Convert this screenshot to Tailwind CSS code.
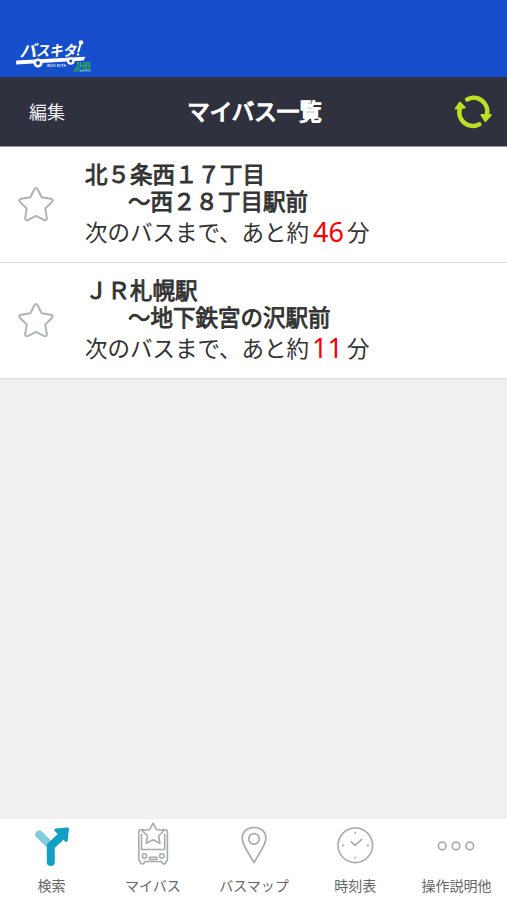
<!DOCTYPE html>
<html lang="ja">
<head>
    <meta charset="UTF-8">
    <meta name="viewport" content="width=device-width, initial-scale=1.0">
    <title>マイバス一覧</title>
    <script src="https://cdn.jsdelivr.net/npm/@tailwindcss/browser@4"></script>
</head>
<body class="flex h-screen flex-col overflow-hidden bg-[#f0f0f0] font-['Noto_Sans_CJK_JP',sans-serif] text-[#333333]">

    <!-- ロゴ -->
    <div class="h-[77px] shrink-0 bg-[#154dcb] pt-[34px] pl-3">
        <svg class="h-[42px] w-[88px]" viewBox="12 34 88 42" role="img" aria-label="バスキタ!">
            <g fill="#fff" font-weight="700">
                <text transform="translate(19.5 56.6) skewX(-12)" font-size="17" textLength="17" lengthAdjust="spacingAndGlyphs">バ</text>
                <text transform="translate(36 56.4) skewX(-12)" font-size="15" textLength="40" lengthAdjust="spacingAndGlyphs">スキタ</text>
            </g>
            <path d="M80.2 45l-1.8 6.5" stroke="#fff" stroke-width="2" stroke-linecap="round" />
            <circle cx="81" cy="42.5" r="2.3" fill="#fff" />
            <circle cx="78" cy="54.5" r="1.2" fill="#fff" />
            <path d="M16.3 60.4L85.5 56.8L83.5 60.6L16 64.4Z" fill="#fff" />
            <circle cx="38" cy="63" r="3.3" fill="#154dcb" stroke="#fff" stroke-width="2.6" />
            <circle cx="70.8" cy="61" r="2.7" fill="#154dcb" stroke="#fff" stroke-width="2.2" />
            <text x="47" y="67" font-size="4" font-weight="700" fill="#d5e0fa" textLength="19">BUS KITA</text>
            <text x="74.5" y="70.3" font-size="10" font-weight="900" font-style="italic" font-family="Liberation Sans" fill="#31b14a" textLength="16" lengthAdjust="spacingAndGlyphs">JHB</text>
            <path d="M73 71h10" stroke="#31b14a" stroke-width="1" />
            <path d="M80 70.8h11" stroke="#b9cdf5" stroke-width="0.8" />
        </svg>
    </div>

    <!-- タイトルバー -->
    <header class="grid h-[70px] shrink-0 grid-cols-[1fr_auto_1fr] items-center border-b border-[#99989c] bg-[#30313e] pr-[15px] pb-[2px] pl-[29px] text-white">
        <button class="justify-self-start text-[18px] leading-none text-[#f0f0f4]">編集</button>
        <h1 class="-ml-3 text-[22.5px] leading-none [-webkit-text-stroke:1.3px]">マイバス一覧</h1>
        <button class="justify-self-end pt-[2px]" aria-label="更新">
            <svg class="h-9 w-[38px]" viewBox="454 94 38 36" fill="none" stroke="#bfdf24" stroke-width="4.6" stroke-linecap="round">
                <path d="M467.2 99.4A13.6 13.6 0 0 1 486.8 115" />
                <path d="M479.3 124.3A13.6 13.6 0 0 1 460 108" />
                <path d="M481.5 115h9.2l-5.4 6z" fill="#bfdf24" stroke-width="2" stroke-linejoin="round" />
                <path d="M455.8 108.6l4.2-6 4.8 5z" fill="#bfdf24" stroke-width="2" stroke-linejoin="round" />
            </svg>
        </button>
    </header>

    <!-- マイバス -->
    <ul class="shrink-0 text-[22.5px] leading-[27px]">
        <li class="flex h-[116px] border-b border-[#dcdcdc] bg-white">
            <div class="w-[85px] shrink-0 pt-[39px] pl-[17px]">
                <svg class="size-[38px]" viewBox="0 0 38 38" fill="none" stroke="#adb4b6" stroke-width="2" stroke-linejoin="round">
                    <path d="M17.3 3.5Q19 .5 20.7 3.5L24.6 11.3L33.8 12.8Q37 13.5 34.8 16L28.2 22.6L29.8 31.6Q30 35.3 26.8 33.8L19 29.8L11.2 33.8Q8 35.3 8.2 31.6L9.8 22.6L3.2 16Q1 13.5 4.2 12.8L13.4 11.3Z" />
                </svg>
            </div>
            <div class="pt-[13px] whitespace-nowrap">
                <p class="[-webkit-text-stroke:0.9px]">北５条西１７丁目</p>
                <p class="pl-[43px] [-webkit-text-stroke:0.9px]">～西２８丁目駅前</p>
                <p class="mt-1 flex">次のバスまで、あと約<span class="w-[38px] pl-1 font-['Noto_Sans'] text-[27px] text-[#ff0000]">46</span>分</p>
            </div>
        </li>
        <li class="flex h-[116px] border-b border-[#dcdcdc] bg-white">
            <div class="w-[85px] shrink-0 pt-[39px] pl-[17px]">
                <svg class="size-[38px]" viewBox="0 0 38 38" fill="none" stroke="#adb4b6" stroke-width="2" stroke-linejoin="round">
                    <path d="M17.3 3.5Q19 .5 20.7 3.5L24.6 11.3L33.8 12.8Q37 13.5 34.8 16L28.2 22.6L29.8 31.6Q30 35.3 26.8 33.8L19 29.8L11.2 33.8Q8 35.3 8.2 31.6L9.8 22.6L3.2 16Q1 13.5 4.2 12.8L13.4 11.3Z" />
                </svg>
            </div>
            <div class="pt-[13px] whitespace-nowrap">
                <p class="[-webkit-text-stroke:0.9px]">ＪＲ札幌駅</p>
                <p class="pl-[43px] [-webkit-text-stroke:0.9px]">～地下鉄宮の沢駅前</p>
                <p class="mt-1 flex">次のバスまで、あと約<span class="w-[38px] pl-[3px] font-['Noto_Sans'] text-[27px] text-[#ff0000]">11</span>分</p>
            </div>
        </li>
    </ul>

    <!-- タブバー -->
    <nav class="mt-auto grid h-[81px] shrink-0 grid-cols-5 bg-white pl-px text-[14px] leading-5 whitespace-nowrap text-[#666666]">
        <a class="flex flex-col items-center pt-[3px]">
            <svg class="h-12 w-10" viewBox="32 822 40 48" fill="none" stroke-width="8" stroke-linecap="round">
                <path d="M39.3 834.5l8 8" stroke="#83cbe0" />
                <path d="M50.8 862V846L60 837.5" stroke="#12a0c5" stroke-linejoin="round" />
                <path d="M55.8 830L67.4 829L66.2 840.5Z" fill="#12a0c5" stroke="#12a0c5" stroke-width="3" stroke-linejoin="round" />
            </svg>
            <span class="mt-[5px]">検索</span>
        </a>
        <a class="flex flex-col items-center pt-[3px]">
            <svg class="h-12 w-10" viewBox="133 822 40 48" fill="none" stroke="#a5acae" stroke-width="1.6" stroke-linejoin="round">
                <path d="M144.3 829.8H141Q138.8 829.8 138.8 832V859.8Q138.8 861.2 140.3 861.2V862.2Q140.5 864 142.3 864Q144.2 864 144.5 861.5H161.7Q162 864 163.9 864Q165.8 864 166 862.2V861.2Q167.4 861.2 167.4 859.8V832Q167.4 829.8 165.2 829.8H162" />
                <path d="M142.5 834.5H141.5V849.5H164.7V834.5H163.7" />
                <path d="M153.1 823.2L156.4 829.5L164.2 830.5L158.6 836L159.9 843.4L153.1 839.8L146.3 843.4L147.6 836L142 830.5L149.8 829.5Z" fill="#fff" />
                <circle cx="144.5" cy="856" r="2.2" />
                <circle cx="161.8" cy="856" r="2.2" />
                <path d="M149.5 859.5V857.3H156.7V859.5Z" />
            </svg>
            <span class="mt-[5px]">マイバス</span>
        </a>
        <a class="flex flex-col items-center pt-[3px]">
            <svg class="h-12 w-10" viewBox="234 822 40 48" fill="none" stroke="#a5acae" stroke-width="1.7" stroke-linejoin="round">
                <path d="M254 862.5C250.5 856 242.2 845 242.2 838.5C242.2 831.5 247 827.5 254 827.5S265.9 831.5 265.9 838.5C265.9 845 257.5 856 254 862.5Z" />
                <circle cx="254" cy="838.9" r="5.3" />
            </svg>
            <span class="mt-[5px]">バスマップ</span>
        </a>
        <a class="flex flex-col items-center pt-[3px]">
            <svg class="h-12 w-10" viewBox="335 822 40 48" fill="none" stroke="#a5acae" stroke-width="1.6" stroke-linecap="round">
                <circle cx="355.3" cy="845.3" r="17.3" />
                <path d="M351.1 841.8l4 3.6 6.6-6M355.2 832.3v.6M355.2 857.4v.6M342.8 845.4h.8M367.4 845.4h.8" />
            </svg>
            <span class="mt-[5px]">時刻表</span>
        </a>
        <a class="flex flex-col items-center pt-[3px]">
            <svg class="h-12 w-10" viewBox="436 822 40 48" fill="none" stroke="#a5acae" stroke-width="1.7">
                <circle cx="442.2" cy="846" r="3.8" />
                <circle cx="456" cy="846" r="3.8" />
                <circle cx="469.8" cy="846" r="3.8" />
            </svg>
            <span class="mt-[5px]">操作説明他</span>
        </a>
    </nav>

</body>
</html>
